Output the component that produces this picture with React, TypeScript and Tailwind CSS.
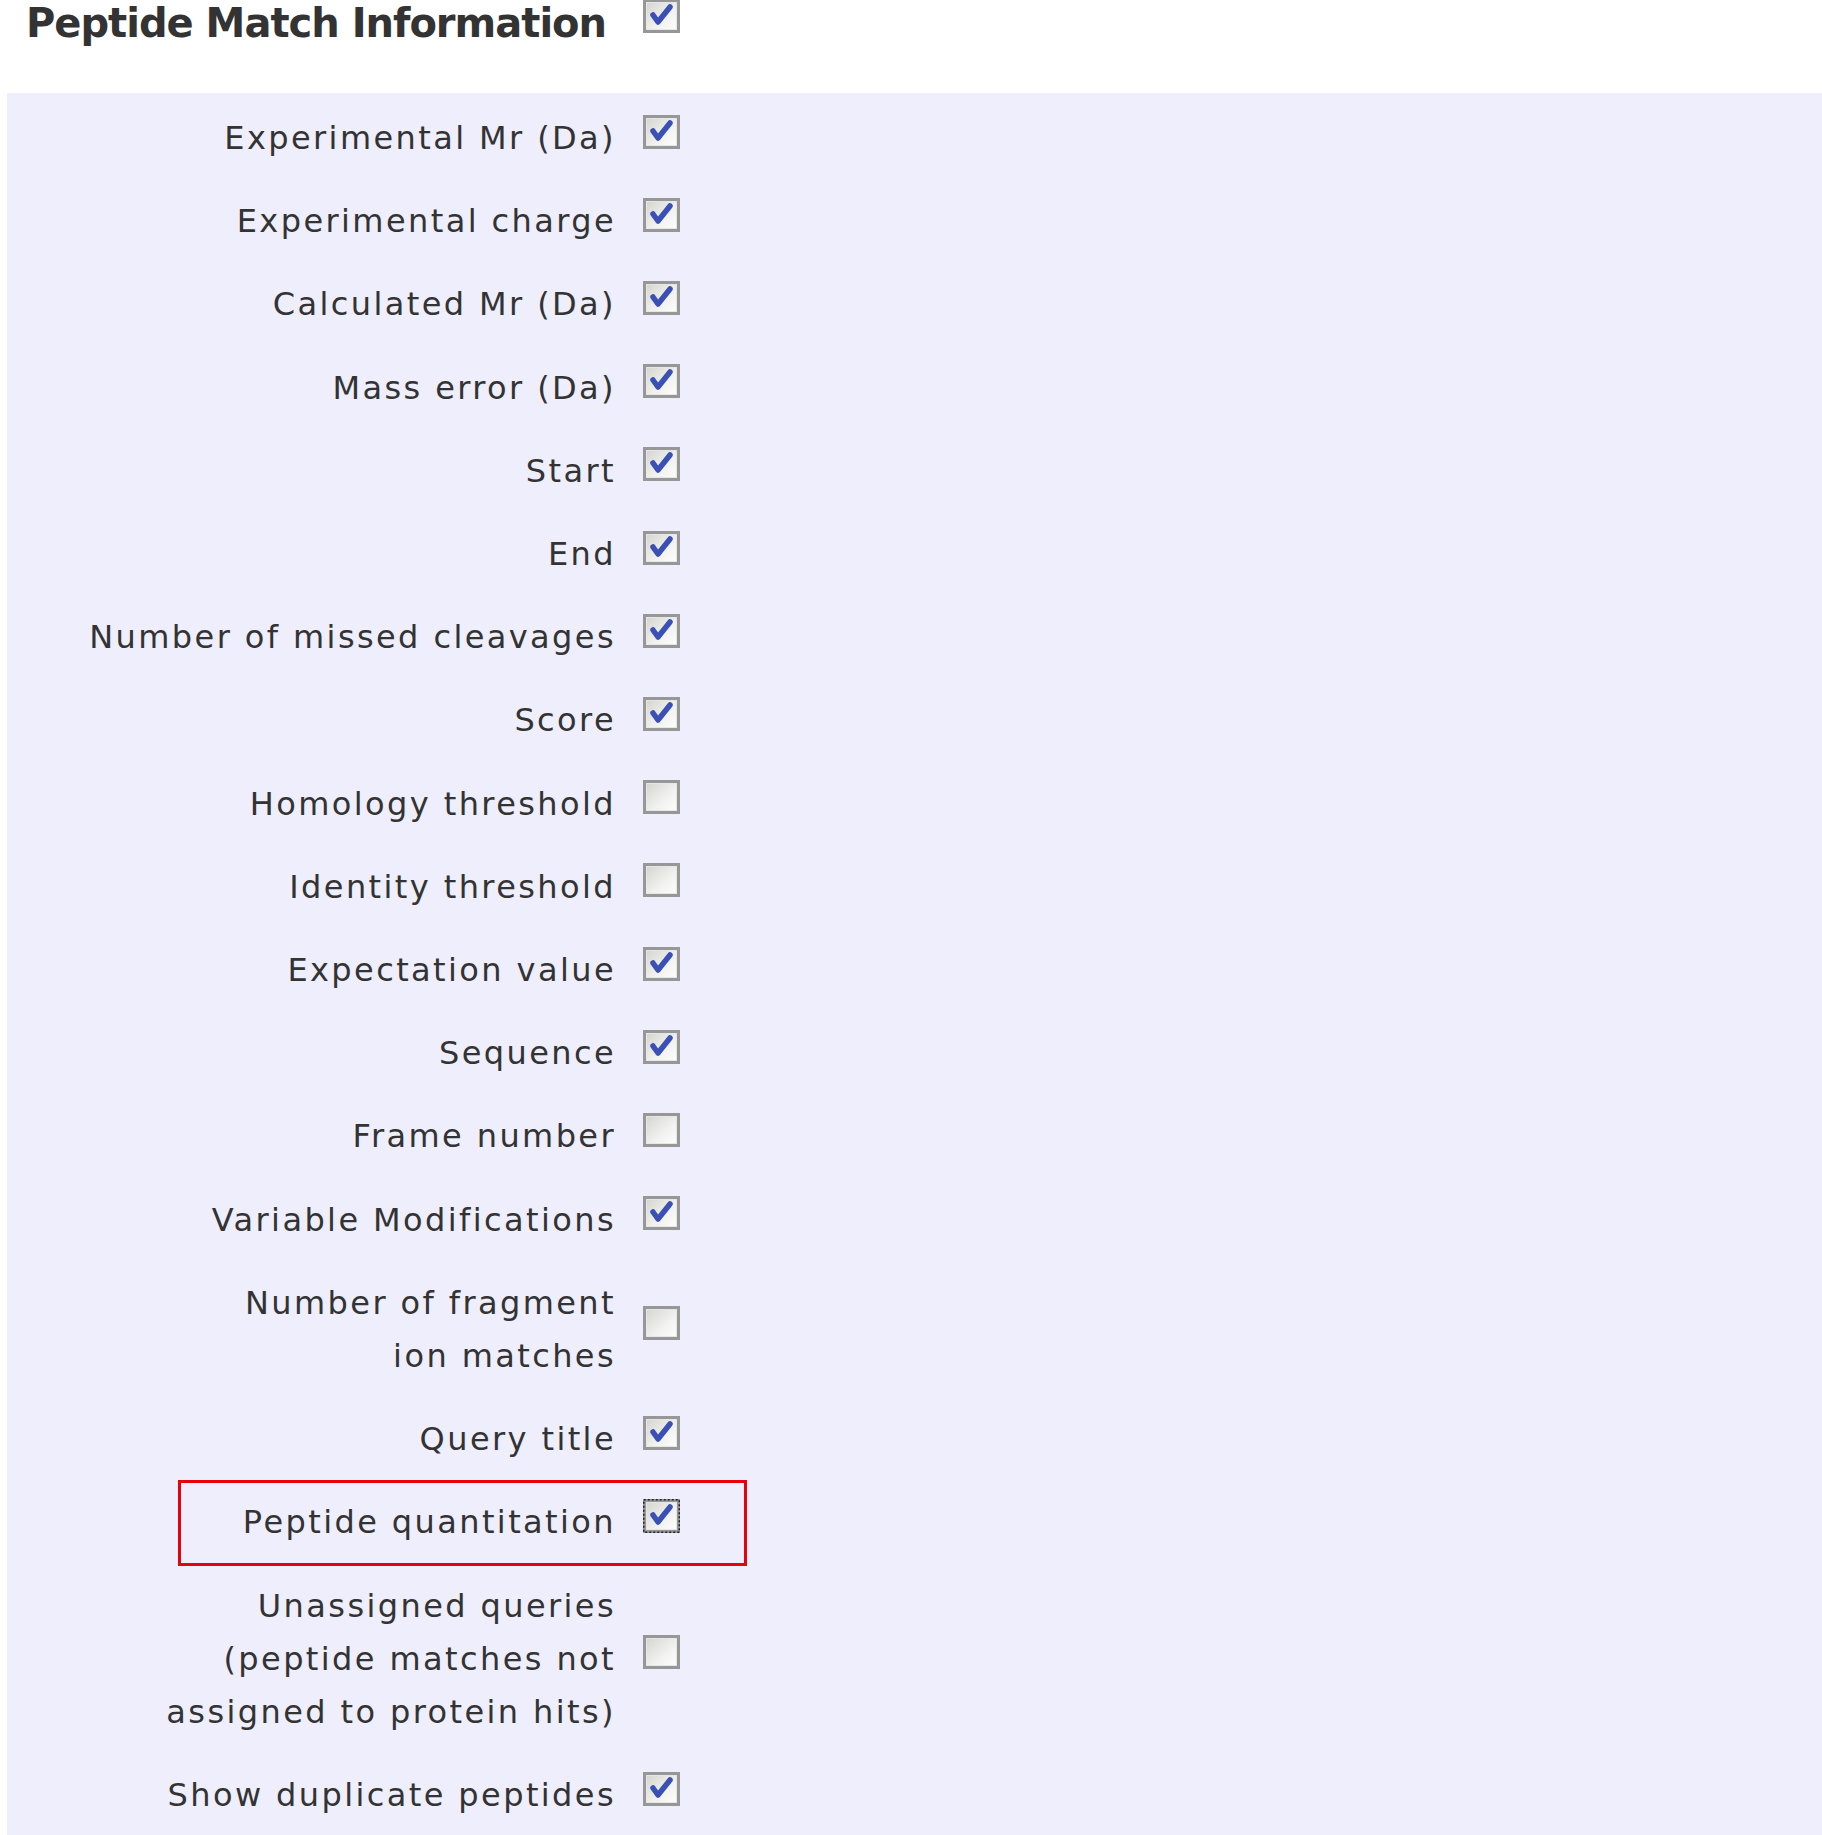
import React from "react";

type Row = { lines: string[]; checked: boolean; focus?: boolean };

const rows: Row[] = [
  { lines: ["Experimental Mr (Da)"], checked: true },
  { lines: ["Experimental charge"], checked: true },
  { lines: ["Calculated Mr (Da)"], checked: true },
  { lines: ["Mass error (Da)"], checked: true },
  { lines: ["Start"], checked: true },
  { lines: ["End"], checked: true },
  { lines: ["Number of missed cleavages"], checked: true },
  { lines: ["Score"], checked: true },
  { lines: ["Homology threshold"], checked: false },
  { lines: ["Identity threshold"], checked: false },
  { lines: ["Expectation value"], checked: true },
  { lines: ["Sequence"], checked: true },
  { lines: ["Frame number"], checked: false },
  { lines: ["Variable Modifications"], checked: true },
  { lines: ["Number of fragment", "ion matches"], checked: false },
  { lines: ["Query title"], checked: true },
  { lines: ["Peptide quantitation"], checked: true, focus: true },
  {
    lines: ["Unassigned queries", "(peptide matches not", "assigned to protein hits)"],
    checked: false,
  },
  { lines: ["Show duplicate peptides"], checked: true },
];

function Box({ checked, focus }: { checked: boolean; focus?: boolean }) {
  return (
    <svg width="37" height="34" viewBox="0 0 37 34" className="block">
      <defs>
        <linearGradient id="cbg" x1="0" y1="0" x2="1" y2="1">
          <stop offset="0" stopColor="#d2d2cc" />
          <stop offset="0.6" stopColor="#f2f2f0" />
          <stop offset="1" stopColor="#ffffff" />
        </linearGradient>
      </defs>
      <rect x="1.5" y="1.5" width="34" height="31" fill="url(#cbg)" stroke="#979797" strokeWidth="3" />
      <rect x="3.5" y="3.5" width="30" height="27" fill="none" stroke="#e6e6e6" strokeWidth="1" />
      {checked && (
        <path
          d="M10 16 L15 23 L27 8"
          fill="none"
          stroke="#3b50b4"
          strokeWidth="5.5"
          strokeLinejoin="round"
          strokeLinecap="round"
        />
      )}
      {focus && (
        <rect
          x="0.75"
          y="0.75"
          width="35.5"
          height="32.5"
          fill="none"
          stroke="#222"
          strokeWidth="1.5"
          strokeDasharray="2 2"
        />
      )}
    </svg>
  );
}

export default function App() {
  return (
    <div className="min-h-[1835px] bg-white font-['DejaVu_Sans',sans-serif] text-[#333]">
      <div className="flex h-[93px]">
        <div className="w-[643px] shrink-0 pl-[26px] pt-[3px] text-[40px] font-bold leading-[40px] tracking-[-1px] text-[#333]">
          Peptide Match Information
        </div>
        <div className="mt-[-1px]">
          <Box checked />
        </div>
      </div>
      <div className="ml-[7px] min-h-[1742px] bg-[#eeeefd] pt-[4px]">
        {rows.map((r, i) => (
          <div key={i} className="relative flex items-center py-[15px]">
            <div className="w-[609px] shrink-0 text-right text-[32px] leading-[53.2px] tracking-[2.4px] text-[#333]">
              {r.lines.map((l, j) => (
                <div key={j}>{l}</div>
              ))}
            </div>
            <div className="mb-[14px] ml-[27px] shrink-0">
              <Box checked={r.checked} focus={r.focus} />
            </div>
            {r.focus && (
              <div className="absolute bottom-[-1px] left-[171px] top-[-1px] w-[569px] border-[3px] border-[#e8000b]" />
            )}
          </div>
        ))}
      </div>
    </div>
  );
}
